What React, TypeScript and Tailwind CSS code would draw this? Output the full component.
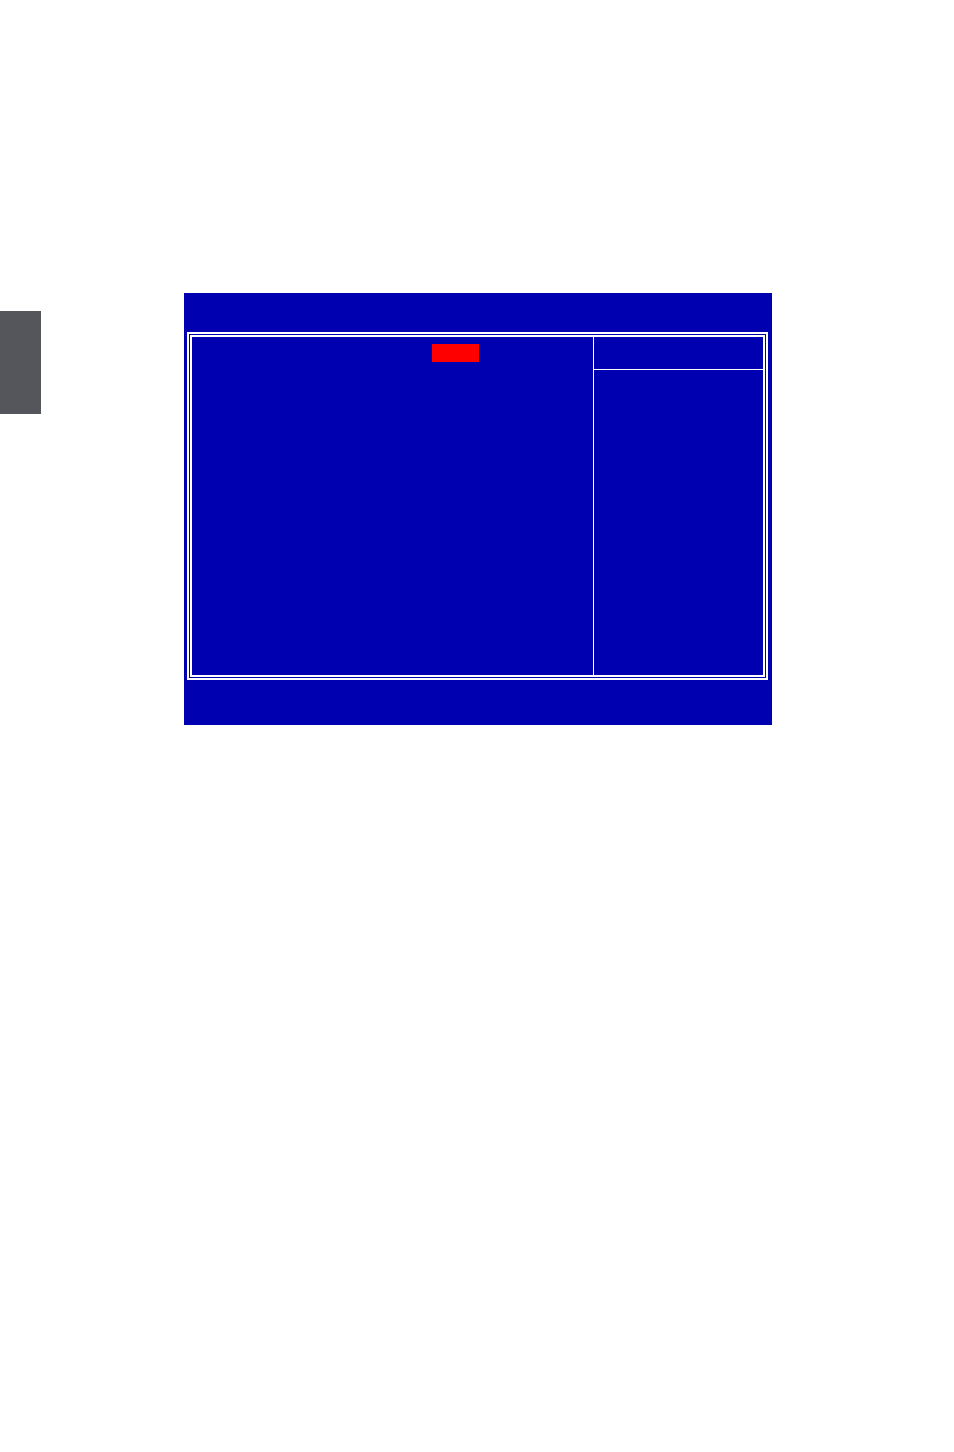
export default function App() {
  return (
    <div className="w-[954px] h-[1452px] bg-white flex items-start font-['Liberation_Sans',sans-serif]">
      {/* chapter thumb tab on the page edge */}
      <div className="w-[41px] h-[103px] mt-[311px] bg-[#55565c]" />

      {/* setup screen */}
      <div className="w-[588px] h-[432px] mt-[293px] ml-[143px] bg-[#0000b0] pt-[39px] pl-[3px]">
        <div className="w-[581px] h-[348px] border-2 border-white p-px">
          <div className="h-full border-2 border-white flex">
            <div className="w-[401px] pt-[7px] pl-[240px]">
              <div className="w-[47px] h-[18px] bg-[#ff0000]" />
            </div>
            <div className="flex-1 border-l border-white flex flex-col">
              <div className="h-[33px] border-b border-white" />
              <div className="flex-1" />
            </div>
          </div>
        </div>
      </div>
    </div>
  )
}
